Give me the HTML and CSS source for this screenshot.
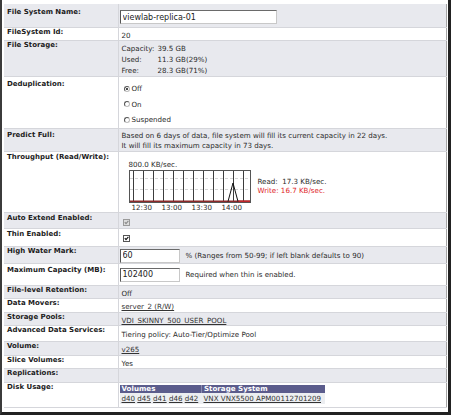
FILE: index.html
```html
<!DOCTYPE html>
<html lang="en">
<head>
  <meta charset="UTF-8" />
  <title>File System Properties</title>
  <link rel="stylesheet" href="styles.css">
</head>
<body>
  <div class="window">
    <table class="props">
      <tr class="row-name">
        <th>File System Name:</th>
        <td><input class="field field-name" type="text" value="viewlab-replica-01"></td>
      </tr>
      <tr>
        <th>FileSystem Id:</th>
        <td>20</td>
      </tr>
      <tr class="row-storage">
        <th>File Storage:</th>
        <td>
          <table class="usage">
            <tr><td>Capacity:</td><td>39.5 GB</td></tr>
            <tr><td>Used:</td><td>11.3 GB(29%)</td></tr>
            <tr><td>Free:</td><td>28.3 GB(71%)</td></tr>
          </table>
        </td>
      </tr>
      <tr class="row-dedup">
        <th>Deduplication:</th>
        <td>
          <div class="option"><span class="radio on"></span>Off</div>
          <div class="option"><span class="radio"></span>On</div>
          <div class="option"><span class="radio"></span>Suspended</div>
        </td>
      </tr>
      <tr class="row-predict">
        <th>Predict Full:</th>
        <td>
          Based on 6 days of data, file system will fill its current capacity in 22 days.<br>
          It will fill its maximum capacity in 73 days.
        </td>
      </tr>
      <tr class="row-chart">
        <th>Throughput (Read/Write):</th>
        <td>
          <div class="throughput">
            <div class="graph">
              <div class="graph-scale">800.0 KB/sec.</div>
              <svg class="graph-plot" width="122" height="33" viewBox="0 0 122 33">
                <rect x="0.5" y="0.5" width="121" height="32" fill="#fff" stroke="#555"/>
                <path d="M1 8.5H121M1 19.5H121" stroke="#d4d4d4" stroke-dasharray="3 2"/>
                <path d="M4.5 1V32M14.5 1V32M24.5 1V32M34.5 1V32M44.5 1V32M54.5 1V32M64.5 1V32M74.5 1V32M84.5 1V32M94.5 1V32M104.5 1V32M114.5 1V32" stroke="#3c3c3c"/>
                <path d="M1 31.3H121" stroke="#8c2a2a" stroke-width="1.4"/>
                <path d="M109 31.3H121" stroke="#c0262a" stroke-width="1.6"/>
                <path d="M99 31.5L104 13L109 31.5" fill="none" stroke="#111"/>
              </svg>
              <div class="graph-times">
                <span>12:30</span><span>13:00</span><span>13:30</span><span>14:00</span>
              </div>
            </div>
            <div class="rates">
              <div class="rate">Read:  17.3 KB/sec.</div>
              <div class="rate write">Write: 16.7 KB/sec.</div>
            </div>
          </div>
        </td>
      </tr>
      <tr class="row-check">
        <th>Auto Extend Enabled:</th>
        <td>
          <svg class="check" width="7" height="7" viewBox="0 0 7 7">
            <rect x="0.5" y="0.5" width="6" height="6" fill="#dcdcdc" stroke="#9a9a9a"/>
            <path d="M1.8 3.2L3 4.6L5.4 1.8" fill="none" stroke="#8a8a8a" stroke-width="1.1"/>
          </svg>
        </td>
      </tr>
      <tr class="row-check row-thin">
        <th>Thin Enabled:</th>
        <td>
          <svg class="check" width="7" height="7" viewBox="0 0 7 7">
            <rect x="0.5" y="0.5" width="6" height="6" fill="#fff" stroke="#555"/>
            <path d="M1.8 3.2L3 4.6L5.4 1.8" fill="none" stroke="#111" stroke-width="1.1"/>
          </svg>
        </td>
      </tr>
      <tr class="row-entry">
        <th>High Water Mark:</th>
        <td>
          <div class="entry">
            <input class="field field-short" type="text" value="60">
            <span>% (Ranges from 50-99; if left blank defaults to 90)</span>
          </div>
        </td>
      </tr>
      <tr class="row-entry row-maxcap">
        <th>Maximum Capacity (MB):</th>
        <td>
          <div class="entry">
            <input class="field field-short" type="text" value="102400">
            <span>Required when thin is enabled.</span>
          </div>
        </td>
      </tr>
      <tr>
        <th>File-level Retention:</th>
        <td>Off</td>
      </tr>
      <tr>
        <th>Data Movers:</th>
        <td><a href="#">server_2 (R/W)</a></td>
      </tr>
      <tr>
        <th>Storage Pools:</th>
        <td><a href="#">VDI_SKINNY_500_USER_POOL</a></td>
      </tr>
      <tr class="row-tiering">
        <th>Advanced Data Services:</th>
        <td>Tiering policy: Auto-Tier/Optimize Pool</td>
      </tr>
      <tr>
        <th>Volume:</th>
        <td><a href="#">v265</a></td>
      </tr>
      <tr>
        <th>Slice Volumes:</th>
        <td>Yes</td>
      </tr>
      <tr>
        <th>Replications:</th>
        <td></td>
      </tr>
      <tr class="row-disk">
        <th>Disk Usage:</th>
        <td>
          <table class="disks">
            <tr><th>Volumes</th><th>Storage System</th></tr>
            <tr>
              <td><a href="#">d40</a> <a href="#">d45</a> <a href="#">d41</a> <a href="#">d46</a> <a href="#">d42</a></td>
              <td><a href="#">VNX VNX5500 APM00112701209</a></td>
            </tr>
          </table>
        </td>
      </tr>
    </table>
  </div>
</body>
</html>
```

FILE: styles.css
```css
* {
  box-sizing: border-box;
}

body {
  margin: 0;
  background: #fff;
  font-family: "DejaVu Sans", Verdana, sans-serif;
  font-size: 7.1px;
  color: #2a2a2a;
}

.window {
  width: 451px;
  border-left: 2px solid #3b3b3b;
  border-right: 3px solid #222;
  border-bottom: 3px solid #222;
  padding: 4px 1px 4px 2px;
}

/* property sheet */
.props {
  width: 100%;
  border-collapse: collapse;
  border-right: 1px solid #a5a5a5;
  border-bottom: 1px solid #a5a5a5;
}

.props > tbody > tr {
  height: 13.5px;
}

.props > tbody > tr > th,
.props > tbody > tr > td {
  border-bottom: 1px solid #d5d6db;
  vertical-align: top;
  text-align: left;
  line-height: 9.5px;
}

.props > tbody > tr > th {
  width: 114px;
  padding: 0 3px;
  font-size: 7px;
  font-weight: bold;
  color: #1c1c1c;
  border-right: 1px solid #d5d6db;
}

.props > tbody > tr > td {
  padding: 3px 3px 0;
}

.props > tbody > tr:nth-child(odd) {
  background: #e8e9ee;
}

a {
  color: #333;
}

/* text inputs */
.field {
  display: block;
  height: 14px;
  margin: 0 0 0 -2px;
  padding: 0 2px;
  border: 1px solid #c8c8c8;
  border-top-color: #6a6a6a;
  border-left-color: #555;
  background: #fff;
  font-family: "DejaVu Sans", Verdana, sans-serif;
  font-size: 8px;
  color: #222;
}

.field-name {
  width: 157px;
}

.field-short {
  width: 60px;
}

.props > tbody > .row-name {
  height: 23px;
}

.props .row-name > th {
  padding-top: 4px;
}

.props .row-name > td {
  padding-top: 6px;
}

/* storage usage */
.props > tbody > .row-storage {
  height: 36px;
}

.props .row-storage > td {
  padding-top: 2px;
}

.usage {
  border-collapse: collapse;
}

.usage td {
  padding: 0;
  line-height: 11px;
}

.usage td:first-child {
  width: 36px;
}

/* radio buttons */
.props > tbody > .row-dedup {
  height: 51px;
}

.props .row-chart > th,
.props .row-thin > th {
  padding-top: 1px;
}

.props .row-dedup > th {
  padding-top: 3px;
}

.props .row-dedup > td {
  padding-top: 4px;
}

.option {
  display: flex;
  align-items: center;
  height: 15.5px;
  gap: 2px;
}

.radio {
  width: 6px;
  height: 6px;
  margin-left: 2px;
  border-radius: 50%;
  border: 1px solid #bdbdbd;
  border-top-color: #555;
  border-left-color: #555;
  background: #fff;
  position: relative;
}

.radio.on::after {
  content: "";
  position: absolute;
  left: 1px;
  top: 1px;
  width: 2px;
  height: 2px;
  border-radius: 50%;
  background: #111;
}

.props > tbody > .row-predict {
  height: 23px;
}

.props .row-predict > th {
  padding-top: 2px;
}

.props .row-predict > td {
  line-height: 10px;
  padding-top: 2px;
}

/* throughput graph */
.props > tbody > .row-chart {
  height: 61px;
}

.props .row-chart > td {
  padding-top: 8px;
}

.throughput {
  display: flex;
  align-items: center;
}

.graph {
  margin-left: 7px;
}

.graph-scale {
  line-height: 10px;
}

.graph-plot {
  display: block;
}

.graph-times {
  display: flex;
  line-height: 9px;
  padding-left: 3px;
}

.graph-times span {
  width: 30px;
}

.rates {
  margin-left: 6px;
  line-height: 9px;
}

.rate {
  white-space: pre;
}

.write {
  color: #e0262a;
}

/* checkboxes */
.props > tbody > .row-check {
  height: 16px;
}

.props > tbody > .row-thin {
  height: 18px;
}

.props .row-check > th {
  padding-top: 1px;
}

.check {
  display: block;
  margin: 3px 0 0 1px;
}

/* input rows */
.props > tbody > .row-entry {
  height: 17px;
}

.props > tbody > .row-maxcap {
  height: 22px;
}

.entry {
  display: flex;
  align-items: center;
  gap: 6px;
}

.props .row-entry > td {
  padding-top: 2px;
}

.props .row-maxcap > td {
  padding-top: 4px;
}

.props .row-maxcap > th {
  padding-top: 2px;
}

.props > tbody > .row-tiering {
  height: 16px;
}

.props .row-tiering > td {
  padding-top: 4px;
}

/* disk usage */
.props > tbody > .row-disk {
  height: 25px;
}

.props .row-disk > td {
  padding-top: 2px;
}

.disks {
  width: 205px;
  border-collapse: collapse;
  margin-left: -2px;
}

.disks th {
  background: #5b5c8c;
  color: #fff;
  font-weight: bold;
  text-align: left;
  line-height: 8px;
  padding: 0 2px;
  border-right: 1px solid #8a8ab0;
}

.disks th:last-child {
  border-right: none;
}

.disks td {
  background: #eceef1;
  line-height: 10px;
  padding: 1px 2px 0;
}

.disks th:first-child {
  width: 82px;
}
```
